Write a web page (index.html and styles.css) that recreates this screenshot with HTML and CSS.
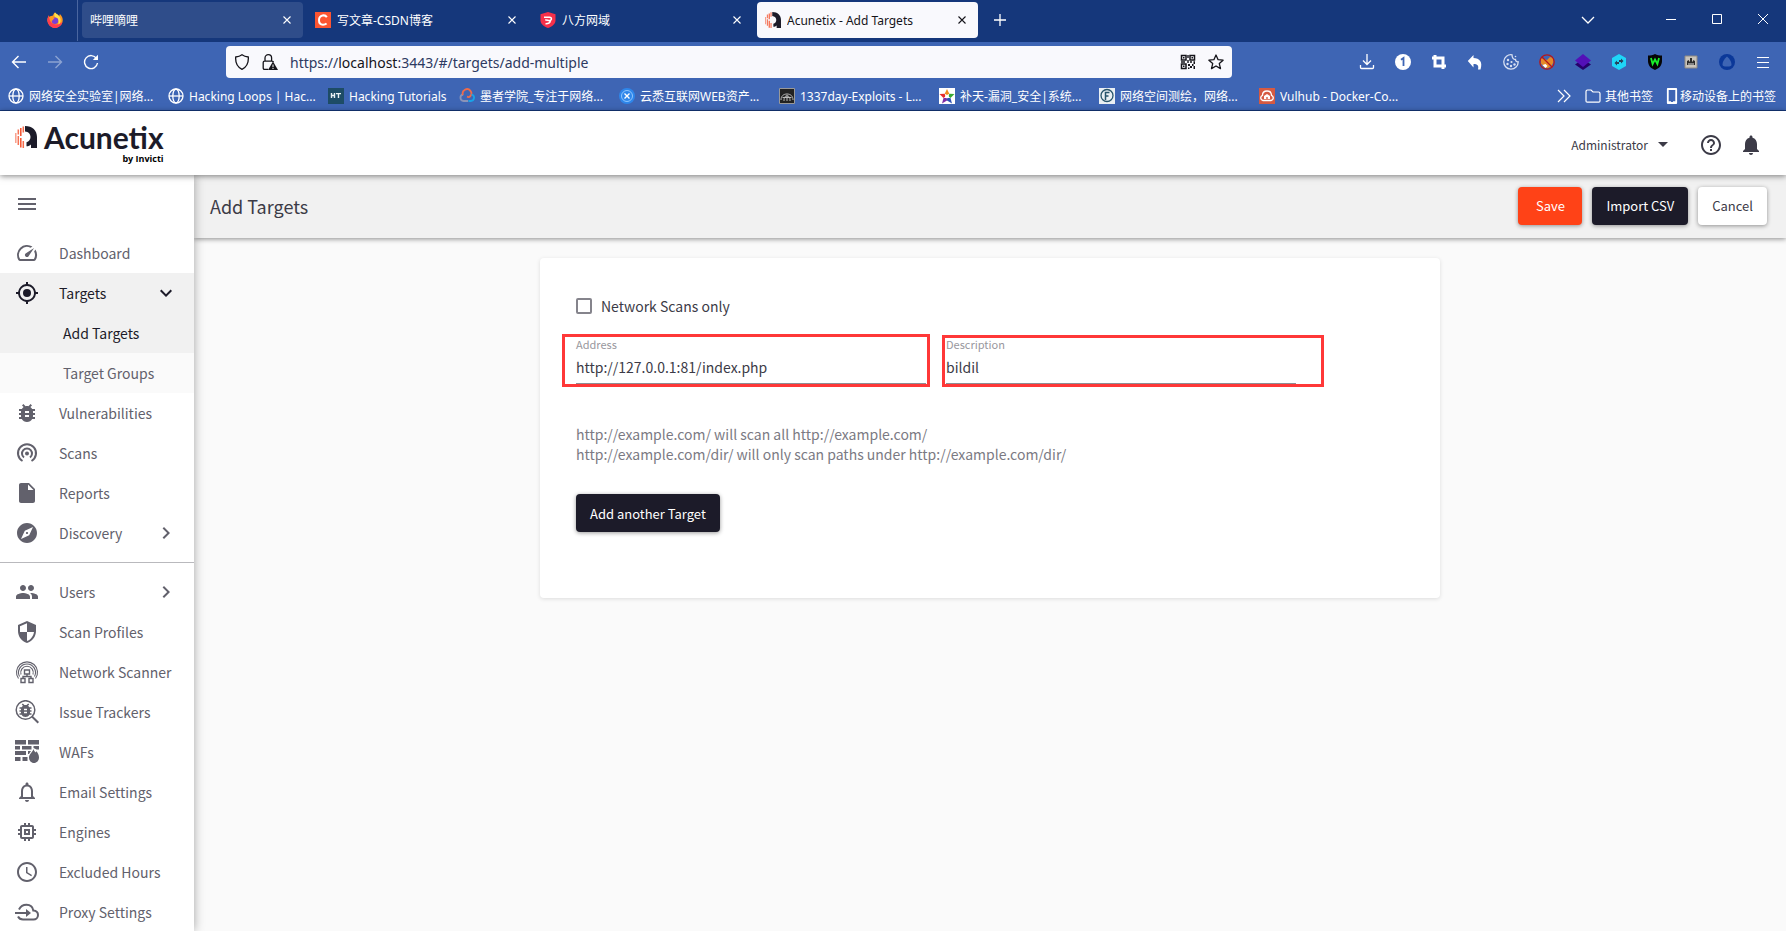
FILE: index.html
```html
<!DOCTYPE html>
<html lang="zh-CN">
<head>
<meta charset="utf-8">
<title>Acunetix - Add Targets</title>
<link rel="stylesheet" href="styles.css">
</head>
<body>
<svg class="defs" width="0" height="0" aria-hidden="true">
  <symbol id="globe" viewBox="0 0 16 16"><g fill="none" stroke="#fff" stroke-width="1.3"><circle cx="8" cy="8" r="7"/><ellipse cx="8" cy="8" rx="3.2" ry="7"/><path d="M1 8h14"/></g></symbol>
  <symbol id="close" viewBox="0 0 16 16"><path d="M4.500 4.500l7 7M11.500 4.500l-7 7" fill="none" stroke="currentColor" stroke-width="1.1"/></symbol>
  <symbol id="mark" viewBox="0 0 22 22"><g stroke="#f4512c" stroke-width="1.5" fill="none"><path d="M.8 7v10" opacity=".55"/><path d="M3.300 3.500v5M3.300 10v9" opacity=".8"/><path d="M5.800 2v8M5.800 12v9.500"/><path d="M8.300 .5v6M8.300 15v7" opacity=".85"/></g><path fill="#1c1b29" d="M10 0C17.500 0 22 4.500 22 11v11h-6v-3.500c-1.200 1.200-2.500 1.800-4.500 1.800v-4c2.500-.8 4-2.700 4-5.300 0-3-2-5.200-5.500-5.500z"/></symbol>
  <symbol id="right" viewBox="0 0 24 24"><path fill="currentColor" d="M8.590 16.590L13.170 12 8.590 7.410 10 6l6 6-6 6z"/></symbol>
  <symbol id="down" viewBox="0 0 24 24"><path fill="currentColor" d="M7.410 8.590L12 13.170l4.590-4.580L18 10l-6 6-6-6z"/></symbol>
</svg>

<header class="browser">
  <div class="tabbar">
    <div class="pinned">
      <svg class="ico16" viewBox="0 0 16 16"><path fill="#ff9a1f" d="M8 .5c1 1.500 3 2 4 3.500.8-.6.8-1.500.7-2.300C15 4 16 6.300 15.700 9A7.700 7.700 0 0 1 .4 8.700C.3 6.500 1 4.700 2 3.300c0 .8.100 1.300.4 1.700C3.400 3.700 5 4 6 3.500 6.500 2.300 7 1.200 8 .5z"/><path fill="#ff3b4f" d="M.4 8.700C.3 6.500 1 4.700 2 3.300c.2 3 .8 9 7 9.200 3.500 0 5.500-2 6.500-2.500C14.500 13.500 11.500 16 8 16S.8 13 .4 8.700z"/><path fill="#ffe14a" d="M8 .5c1 1.500 5.300 3 5.600 7 .2 2.500-.8 4-2 5 .4-3-.5-6-3.600-7.500C7 4 7 2 8 .5z"/><circle cx="8" cy="8.800" r="3.300" fill="#7a3fd6"/><path fill="#ff9a1f" d="M3 6c2-1 4-.5 4.600.6-1 .2-1.600.8-1.400 1.500L4 9z"/></svg>
    </div>
    <div class="tab tab-hover"><span class="tab-title">哔哩嘀哩</span><button class="tab-close" aria-label="Close tab"><svg class="ico16"><use href="#close"/></svg></button></div>
    <div class="tab"><svg class="ico16" viewBox="0 0 16 16"><path fill="#fc5531" d="M0 0h16v16H0z"/><path d="M11.800 5.200C10.800 3.500 9 3.200 7.500 3.500 5 4 4 6 4 8.300c0 2.500 1.500 4.400 4 4.400 1.500 0 2.700-.4 3.600-1.200" fill="none" stroke="#fff" stroke-width="2"/></svg><span class="tab-title">写文章-CSDN博客</span><button class="tab-close" aria-label="Close tab"><svg class="ico16"><use href="#close"/></svg></button></div>
    <div class="tab"><svg class="ico16" viewBox="0 0 16 16"><path fill="#f5304a" d="M8 0l7.500 2.200v6.300c0 3.500-3.500 6-7.500 7.500C4 14.500.5 12 .5 8.500V2.200z"/><path d="M4 5.200h5.500c2.800.2 2.400 3.600-.3 3.300-1.700-.2-2.400-.8-4-.5M5.500 11.800c2.400.2 4.200-.7 5-2.800" fill="none" stroke="#fff" stroke-width="1.500"/></svg><span class="tab-title">八方网域</span><button class="tab-close" aria-label="Close tab"><svg class="ico16"><use href="#close"/></svg></button></div>
    <div class="tab tab-active"><svg class="ico16"><use href="#mark"/></svg><span class="tab-title">Acunetix - Add Targets</span><button class="tab-close" aria-label="Close tab"><svg class="ico16"><use href="#close"/></svg></button></div>
    <button class="new-tab" aria-label="New tab"><svg class="ico16" viewBox="0 0 16 16"><path d="M8 2v12M2 8h12" stroke="#fff" stroke-width="1.300"/></svg></button>
    <div class="window-controls">
      <button aria-label="List tabs"><svg class="ico16" viewBox="0 0 16 16"><path d="M2 5l6 6 6-6" fill="none" stroke="#fff" stroke-width="1.300"/></svg></button>
      <button class="win" aria-label="Minimize"><svg class="ico16" viewBox="0 0 16 16"><path d="M3 7.500h10" stroke="#fff"/></svg></button>
      <button class="win" aria-label="Maximize"><svg class="ico16" viewBox="0 0 16 16"><path d="M3.500 2.500h9v9h-9z" fill="none" stroke="#fff"/></svg></button>
      <button class="win" aria-label="Close"><svg class="ico16" viewBox="0 0 16 16"><path d="M3 2l10 10M13 2L3 12" stroke="#fff"/></svg></button>
    </div>
  </div>

  <div class="navbar">
    <div class="nav-buttons">
      <button aria-label="Back"><svg class="ico16" viewBox="0 0 16 16"><path d="M15 8H2M7.500 2L1.500 8l6 6" fill="none" stroke="#fff" stroke-width="1.400"/></svg></button>
      <button class="dim" aria-label="Forward"><svg class="ico16" viewBox="0 0 16 16"><path d="M1 8h13M8.500 2l6 6-6 6" fill="none" stroke="#fff" stroke-width="1.400"/></svg></button>
      <button aria-label="Reload"><svg class="ico16" viewBox="0 0 16 16"><path d="M13.500 4.500A6.500 6.500 0 1 0 14.500 9" fill="none" stroke="#fff" stroke-width="1.400"/><path d="M15 .8V6H9.800z" fill="#fff"/></svg></button>
    </div>
    <div class="urlbar">
      <svg class="ico16" viewBox="0 0 16 16"><path d="M8 .8c2 1.500 4 2 6.300 2.200.4 5.500-1.300 10-6.300 12.300C3 13 1.300 8.500 1.700 3 4 2.800 6 2.300 8 .8z" fill="none" stroke="#15141a" stroke-width="1.300"/></svg>
      <svg class="ico16" viewBox="0 0 16 16"><path d="M6 15.300H2.500c-.8 0-1.300-.5-1.300-1.300V8.500c0-.8.500-1.300 1.300-1.300h7.600c.8 0 1.200.3 1.300 1M3 7V4a3.300 3.300 0 0 1 6.600 0v3" fill="none" stroke="#15141a" stroke-width="1.300"/><path d="M11 7.500l5 8.500H6z" fill="#15141a"/><path d="M11 10.500v2.700M11 14v1" stroke="#fff"/></svg>
      <a class="url" href="#/targets/add-multiple">https://<span class="host">localhost</span>:3443/#/targets/add-multiple</a>
      <svg class="ico16" viewBox="0 0 16 16"><g fill="none" stroke="#15141a" stroke-width="1.500"><path d="M1.500 1.500h4.500v4.500H1.500zM10 1.500h4.500v4.500H10zM1.500 10h4.500v4.500H1.500z"/></g><path fill="#15141a" d="M3 3h1.500v1.500H3zM11.500 3H13v1.500h-1.500zM3 11.500h1.500V13H3zM7.300 1h1.400v3H7.300zM7.300 6h1.400v3H7.300zM1 7.300h4v1.400H1zM10 7.300h2v1.400h-2zM13.500 7.300H15V10h-1.500zM8 10h2v2H8zM10 12h2v2h-2zM12 10h1.500v2H12zM13.500 12H15v3h-1.500zM8 13.500h1.500V15H8z"/></svg>
      <svg class="ico16" viewBox="0 0 16 16"><path d="M8 1l2.100 4.700 5 .5-3.800 3.400 1.200 5L8 12l-4.500 2.600 1.200-5L.9 6.200l5-.5z" fill="none" stroke="#15141a" stroke-width="1.300" stroke-linejoin="round"/></svg>
    </div>
    <div class="extensions">
      <button aria-label="Downloads"><svg class="ico16" viewBox="0 0 16 16"><path d="M8 0v10M4 6.500l4 4 4-4M1.500 11v2.500c0 .7.300 1 1 1h11c.7 0 1-.3 1-1V11" fill="none" stroke="#fff" stroke-width="1.300"/></svg></button>
      <button aria-label="Extension notices"><svg class="ico16" viewBox="0 0 16 16"><circle cx="8" cy="8" r="8" fill="#fff"/><path d="M6 5.800L8.500 4v8" fill="none" stroke="#3e65b4" stroke-width="1.800"/></svg></button>
      <button aria-label="Crop"><svg class="ico16" viewBox="0 0 16 16"><path d="M1 4h11v11M4 1v11h11" fill="none" stroke="#fff" stroke-width="3"/></svg></button>
      <button aria-label="Undo"><svg class="ico16" viewBox="0 0 16 16"><path d="M6.500 1v3c6 0 9.500 4 7 11.500h-2.500c1-4-.5-5.500-4.500-5.500v3.500L.8 7z" fill="#fff"/></svg></button>
      <button aria-label="Cookies"><svg class="ico16" viewBox="0 0 16 16"><path d="M9 .8a7.200 7.200 0 1 0 6.200 7c-1.700.2-2.700-.8-2.700-2.300C10.500 5.600 9 4 9 .8z" fill="none" stroke="#d8e0f2" stroke-width="1.300"/><g fill="#d8e0f2"><circle cx="5" cy="6" r="1.200"/><circle cx="4.500" cy="10" r="1.200"/><circle cx="8.500" cy="8" r="1.100"/><circle cx="8" cy="12" r="1.200"/><circle cx="11.500" cy="10.500" r="1.200"/><circle cx="12.500" cy="2.500" r=".8"/></g></svg></button>
      <button aria-label="Blocker"><svg class="ico16" viewBox="0 0 16 16"><path fill="#e58a28" d="M2 4l3 1 3 1 3-3 3 1 .5 4-2 4-4 2.500-3-1-3.500-4z"/><path fill="#fff" d="M3.500 11l3-1 2 2-2 2z"/><circle cx="8" cy="8" r="7.200" fill="none" stroke="#b5161b" stroke-width="1.300"/><path d="M3 3l10 10" stroke="#b5161b" stroke-width="1.300"/></svg></button>
      <button aria-label="Layers"><svg class="ico16" viewBox="0 0 16 16"><path fill="#26006b" d="M0 10.500L8 5l8 5.500L8 16z"/><path fill="#5310b8" d="M0 6.500L8 0l8 6.500L8 13z"/></svg></button>
      <button aria-label="Proxy"><svg class="ico16" viewBox="0 0 16 16"><path fill="#1fd5f7" d="M8 0l7 4v8l-7 4-7-4V4z"/><path d="M3.500 9L6 6.500V8h2v2H6v1.500zM12.500 7L10 4.500V6H8v2h2v1.500z" fill="#27415c"/></svg></button>
      <button aria-label="Wappalyzer"><svg class="ico16" viewBox="0 0 16 16"><path fill="#050505" d="M8 0c2 1 4.500 1.600 7 1.600V7c0 4.500-3 7.500-7 9-4-1.500-7-4.500-7-9V1.600C3.500 1.600 6 1 8 0z"/><path d="M4 4l1.600 6L8 5.500l2.400 4.500L12 4" fill="none" stroke="#19f02a" stroke-width="1.800"/></svg></button>
      <button aria-label="Toolbox"><svg class="ico16" viewBox="0 0 16 16"><path fill="#c9c4bb" stroke="#8f8a82" d="M2 2h12v12H2z"/><path fill="#2c2c2c" d="M7 4h2v3l1 1V6l2 1v4H4V7l2-1v2l1-1z"/><path d="M5 10h6" stroke="#ddd"/></svg></button>
      <button aria-label="Hackbar"><svg class="ico16" viewBox="0 0 16 16"><circle cx="8" cy="8" r="8" fill="#0b3899"/><path d="M8 2.500c2.500 2 4.500 5 4.500 8 0 1.500-1 2-4.500 2s-4.500-.5-4.500-2c0-3 2-6 4.500-8z" fill="#3e65b4"/></svg></button>
      <button aria-label="Menu"><svg class="ico16" viewBox="0 0 16 16"><path d="M2 3.500h12M2 8.500h12M2 13.500h12" stroke="#fff"/></svg></button>
    </div>
  </div>

  <nav class="bookmarks" aria-label="Bookmarks">
    <a class="bm" href="#"><svg class="ico16"><use href="#globe"/></svg><span>网络安全实验室|网络...</span></a>
    <a class="bm" href="#"><svg class="ico16"><use href="#globe"/></svg><span>Hacking Loops | Hac...</span></a>
    <a class="bm bm-short" href="#"><svg class="ico16" viewBox="0 0 16 16"><path fill="#1d4c66" d="M0 0h16v16H0z"/><path d="M3.500 5v5M6.500 5v5M3.500 7.500h3M8 5.600h5M10.500 5v5" stroke="#e9f1f4" stroke-width="1.400" fill="none"/></svg><span>Hacking Tutorials</span></a>
    <a class="bm" href="#"><svg class="ico16" viewBox="0 0 16 16"><path d="M9 13H4.500A3.300 3.300 0 0 1 4 6.500" fill="none" stroke="#8a93b8" stroke-width="1.800"/><path d="M4 7a4.300 4.300 0 1 1 7 1.500c-1 1-2 .6-3 .2" fill="none" stroke="#ef6b4a" stroke-width="1.800"/><path d="M12.500 6.500a3.300 3.300 0 0 1-1 6.500H9.500" fill="none" stroke="#19a3e8" stroke-width="1.800"/></svg><span>墨者学院_专注于网络...</span></a>
    <a class="bm" href="#"><svg class="ico16" viewBox="0 0 16 16"><circle cx="8" cy="8" r="8" fill="#2e86ea"/><circle cx="8" cy="8" r="5.500" fill="none" stroke="#8ec6ff"/><path d="M5.500 5.500l5 5M10.500 5.500l-5 5" stroke="#fff" stroke-width="1.400"/></svg><span>云悉互联网WEB资产...</span></a>
    <a class="bm" href="#"><svg class="ico16" viewBox="0 0 16 16"><path fill="#222" stroke="#999" d="M.5.5h15v15H.5z"/><path fill="none" stroke="#bbb" d="M2 12c0-4 2.500-6 6-6s6 2 6 6M5 13c0-4 1-5 3-5s3 1 3 5M8 7v6M3.500 9.500h9"/></svg><span>1337day-Exploits - L...</span></a>
    <a class="bm" href="#"><svg class="ico16" viewBox="0 0 16 16"><path fill="#fff" d="M0 0h16v16H0z"/><path fill="#f08a1c" d="M8 1l2.300 4.700L8 7 5.700 5.700z"/><path fill="#39a935" d="M15.500 6l-4 4-2-1.500.8-2.800z"/><path fill="#2d50b5" d="M13 15.500L8 12.500V10l3.500 0z"/><path fill="#7d2ba5" d="M3 15.500L4.500 10H8v2.500z"/><path fill="#e62b2b" d="M.5 6l5.200-.3.800 2.800-2 1.500z"/><circle cx="8" cy="8.600" r="1.800" fill="#fff"/></svg><span>补天-漏洞_安全|系统...</span></a>
    <a class="bm" href="#"><svg class="ico16" viewBox="0 0 16 16"><path fill="#e9eff3" d="M0 0h16v16H0z"/><circle cx="8" cy="7.500" r="6" fill="none" stroke="#27546b" stroke-width="1.300"/><path d="M6.500 12V4.500h4M6.500 8h3" fill="none" stroke="#27546b" stroke-width="1.500"/></svg><span>网络空间测绘，网络...</span></a>
    <a class="bm" href="#"><svg class="ico16" viewBox="0 0 16 16"><path fill="#d65a42" d="M0 0h16v16H0z"/><path d="M4 12.500a2.700 2.700 0 0 1-.5-5.200C3.500 4.500 5.500 3 8 3s4.500 1.500 4.500 4.300a2.700 2.700 0 0 1-.5 5.200z" fill="none" stroke="#fff" stroke-width="1.300"/><path d="M5 11V8l3-2 3 2v3z" fill="#fff"/><path d="M7.300 9h1.400v2H7.300z" fill="#d65a42"/></svg><span>Vulhub - Docker-Co...</span></a>
    <div class="bm-end">
      <button aria-label="More bookmarks"><svg class="ico16" viewBox="0 0 16 16"><path d="M2 2l6 6-6 6M8 2l6 6-6 6" fill="none" stroke="#fff" stroke-width="1.200"/></svg></button>
      <a class="bm-link" href="#"><svg class="ico16" viewBox="0 0 16 16"><path d="M1 13V3.500C1 2.500 1.500 2 2.500 2H6l2 2h5.500c1 0 1.500.5 1.500 1.500V13c0 .8-.4 1.200-1.200 1.200H2.200C1.400 14.200 1 13.800 1 13z" fill="none" stroke="#fff" stroke-width="1.200"/></svg><span>其他书签</span></a>
      <a class="bm-link bm-phone" href="#"><svg class="phone" viewBox="0 0 12 16"><path d="M1.800 1h8.400v14H1.800z" fill="none" stroke="#fff" stroke-width="1.800" stroke-linejoin="round"/><path d="M2 14h3M7 14h3" stroke="#fff" stroke-width="1.600"/></svg><span>移动设备上的书签</span></a>
    </div>
  </nav>
</header>

<header class="app-header">
  <a class="logo" href="#" aria-label="Acunetix by Invicti">
    <svg class="logo-mark"><use href="#mark"/></svg>
    <span class="logo-text"><span class="logo-name">Acunetix</span><span class="logo-by">by Invicti</span></span>
  </a>
  <div class="account">
    <button class="user">Administrator<svg class="caret" viewBox="0 0 10 5"><path d="M0 0h10L5 5z" fill="#3c3b47"/></svg></button>
    <button aria-label="Help"><svg class="ico24" viewBox="0 0 24 24"><path fill="#3c3b47" d="M11 18h2v-2h-2v2zm1-16C6.480 2 2 6.480 2 12s4.480 10 10 10 10-4.480 10-10S17.520 2 12 2zm0 18c-4.410 0-8-3.590-8-8s3.590-8 8-8 8 3.590 8 8-3.590 8-8 8zm0-14c-2.210 0-4 1.790-4 4h2c0-1.100.9-2 2-2s2 .9 2 2c0 2-3 1.750-3 5h2c0-2.250 3-2.500 3-5 0-2.210-1.790-4-4-4z"/></svg></button>
    <button aria-label="Notifications"><svg class="ico24" viewBox="0 0 24 24"><path fill="#3c3b47" d="M12 22c1.100 0 2-.9 2-2h-4c0 1.100.9 2 2 2zm6-6v-5c0-3.070-1.630-5.640-4.500-6.320V4c0-.83-.67-1.500-1.500-1.500s-1.500.67-1.500 1.500v.68C7.640 5.360 6 7.920 6 11v5l-2 2v1h16v-1z"/></svg></button>
  </div>
</header>

<div class="app">
  <nav class="sidebar" aria-label="Main">
    <button class="burger" aria-label="Toggle menu"><svg class="ico24" viewBox="0 0 24 24"><path fill="currentColor" d="M3 18h18v-2H3zm0-5h18v-2H3zm0-7v2h18V6z"/></svg></button>
    <a class="item" href="#"><svg class="ico24" viewBox="0 0 24 24"><path fill="currentColor" d="M20.380 8.570l-1.230 1.850a8 8 0 0 1-.22 7.580H5.070A8 8 0 0 1 15.580 6.850l1.850-1.230A10 10 0 0 0 3.350 19a2 2 0 0 0 1.720 1h13.850a2 2 0 0 0 1.740-1 10 10 0 0 0-.27-10.440zm-9.790 6.840a2 2 0 0 0 2.830 0l5.660-8.490-8.490 5.660a2 2 0 0 0 0 2.830z"/></svg><span>Dashboard</span></a>
    <a class="item current" href="#"><svg class="ico24" viewBox="0 0 24 24"><circle cx="12" cy="12" r="4" fill="currentColor"/><path fill="currentColor" d="M20.940 11A8.990 8.990 0 0 0 13 3.060V1h-2v2.060A8.990 8.990 0 0 0 3.060 11H1v2h2.060A8.990 8.990 0 0 0 11 20.940V23h2v-2.060A8.990 8.990 0 0 0 20.940 13H23v-2zM12 19c-3.870 0-7-3.130-7-7s3.130-7 7-7 7 3.130 7 7-3.130 7-7 7z"/></svg><span>Targets</span><svg class="chevron"><use href="#down"/></svg></a>
    <a class="item sub current" href="#"><span>Add Targets</span></a>
    <a class="item sub" href="#"><span>Target Groups</span></a>
    <a class="item" href="#"><svg class="ico24" viewBox="0 0 24 24"><path fill="currentColor" d="M20 8h-2.810c-.45-.78-1.070-1.450-1.820-1.960L17 4.410 15.590 3l-2.170 2.170C12.960 5.060 12.490 5 12 5s-.96.060-1.410.170L8.410 3 7 4.410l1.620 1.630C7.880 6.550 7.260 7.220 6.810 8H4v2h2.090c-.05.330-.09.660-.09 1v1H4v2h2v1c0 .34.040.67.090 1H4v2h2.810c1.040 1.790 2.970 3 5.190 3s4.150-1.210 5.190-3H20v-2h-2.090c.05-.33.090-.66.090-1v-1h2v-2h-2v-1c0-.34-.04-.67-.09-1H20zm-6 8h-4v-2h4zm0-4h-4v-2h4z"/></svg><span>Vulnerabilities</span></a>
    <a class="item" href="#"><svg class="ico24" viewBox="0 0 24 24"><g fill="none" stroke="currentColor" stroke-width="2"><path d="M7.500 20A9 9 0 1 1 16.500 20M9 16.500a5 5 0 1 1 6 0"/></g><circle cx="12" cy="12.500" r="2" fill="currentColor"/></svg><span>Scans</span></a>
    <a class="item" href="#"><svg class="ico24" viewBox="0 0 24 24"><path fill="currentColor" d="M6 2c-1.100 0-2 .9-2 2v16c0 1.100.9 2 2 2h12c1.100 0 2-.9 2-2V8l-6-6zm7 7V3.500L18.500 9z"/></svg><span>Reports</span></a>
    <a class="item" href="#"><svg class="ico24" viewBox="0 0 24 24"><path fill="currentColor" d="M12 10.900c-.61 0-1.100.49-1.100 1.100s.49 1.100 1.100 1.100 1.100-.49 1.100-1.100-.49-1.100-1.100-1.100zM12 2C6.480 2 2 6.480 2 12s4.480 10 10 10 10-4.480 10-10S17.520 2 12 2zm2.190 12.190L6 18l3.810-8.190L18 6z"/></svg><span>Discovery</span><svg class="chevron"><use href="#right"/></svg></a>
    <hr class="divider">
    <a class="item" href="#"><svg class="ico24" viewBox="0 0 24 24"><path fill="currentColor" d="M16 11c1.660 0 2.990-1.340 2.990-3S17.660 5 16 5s-3 1.340-3 3 1.340 3 3 3zm-8 0c1.660 0 2.990-1.340 2.990-3S9.660 5 8 5 5 6.340 5 8s1.340 3 3 3zm0 2c-2.330 0-7 1.170-7 3.500V19h14v-2.500c0-2.330-4.670-3.500-7-3.500zm8 0c-.29 0-.62.020-.97.050 1.160.84 1.970 1.970 1.970 3.450V19h6v-2.500c0-2.330-4.670-3.500-7-3.500z"/></svg><span>Users</span><svg class="chevron"><use href="#right"/></svg></a>
    <a class="item" href="#"><svg class="ico24" viewBox="0 0 24 24"><path fill="currentColor" d="M12 1L3 5v6c0 5.550 3.840 10.740 9 12 5.160-1.260 9-6.450 9-12V5zm0 10.990h7c-.53 4.120-3.280 7.790-7 8.940V12H5V6.300l7-3.110z"/></svg><span>Scan Profiles</span></a>
    <a class="item" href="#"><svg class="ico24" viewBox="0 0 24 24"><g fill="none" stroke="currentColor" stroke-width="1.100"><path d="M3.500 18.500A10.500 10.500 0 1 1 20.500 18.500M4.500 16.500a8.500 8.500 0 1 1 15 0M6 14.500a6.300 6.300 0 1 1 12 0"/><path d="M9.500 10h5v4h-5zM6 18.500h4v4H6zM14 18.500h4v4h-4zM12 14v2.500M8 18.500v-2h8v2" stroke-width="1.400"/></g></svg><span>Network Scanner</span></a>
    <a class="item" href="#"><svg class="ico24" viewBox="0 0 24 24"><circle cx="10.500" cy="10" r="9.300" fill="none" stroke="currentColor" stroke-width="1.500"/><path d="M17 16.500l6.300 6.300" stroke="currentColor" stroke-width="2"/><path fill="currentColor" transform="translate(1.500 1.200) scale(.75)" d="M20 8h-2.810c-.45-.78-1.070-1.450-1.820-1.960L17 4.410 15.590 3l-2.170 2.170C12.960 5.060 12.490 5 12 5s-.96.060-1.410.170L8.410 3 7 4.410l1.620 1.630C7.880 6.550 7.260 7.220 6.810 8H4v2h2.090c-.05.330-.09.660-.09 1v1H4v2h2v1c0 .34.040.67.090 1H4v2h2.810c1.040 1.790 2.970 3 5.190 3s4.150-1.210 5.190-3H20v-2h-2.090c.05-.33.090-.66.090-1v-1h2v-2h-2v-1c0-.34-.04-.67-.09-1H20zm-6 8h-4v-2h4zm0-4h-4v-2h4z"/></svg><span>Issue Trackers</span></a>
    <a class="item" href="#"><svg class="ico24" viewBox="0 0 24 24"><path fill="currentColor" d="M0 0h11v4.500H0zM13 0h11v4.500H13zM0 6h5v3.500H0zM7 6h9.500v3.500H7zM18.500 6H24v3.500h-2.500L18.500 8zM0 11h11v4H0zM13 11h3l-2 3h-1zM0 17h5.500v4H0zM7.500 17h5v4h-5z"/><path fill="currentColor" d="M18.500 9c.5 2 1.500 2.500 2 3.500l1-1.200c1.500 2 2.500 3.700 2.500 6.200 0 3-2.200 5.500-5 5.500s-5-2.500-5-5.500c0-3.500 3.500-5 4.500-8.500z"/></svg><span>WAFs</span></a>
    <a class="item" href="#"><svg class="ico24" viewBox="0 0 24 24"><path fill="currentColor" d="M12 22c1.100 0 2-.9 2-2h-4c0 1.100.9 2 2 2zm6-6v-5c0-3.070-1.630-5.640-4.500-6.320V4c0-.83-.67-1.500-1.500-1.500s-1.500.67-1.500 1.500v.68C7.640 5.360 6 7.920 6 11v5l-2 2v1h16v-1zm-2 1H8v-6c0-2.480 1.510-4.500 4-4.500s4 2.020 4 4.500z"/></svg><span>Email Settings</span></a>
    <a class="item" href="#"><svg class="ico24" viewBox="0 0 24 24"><path fill="currentColor" d="M15 9H9v6h6zm-2 4h-2v-2h2zm8-2V9h-2V7c0-1.100-.9-2-2-2h-2V3h-2v2h-2V3H9v2H7c-1.100 0-2 .9-2 2v2H3v2h2v2H3v2h2v2c0 1.100.9 2 2 2h2v2h2v-2h2v2h2v-2h2c1.100 0 2-.9 2-2v-2h2v-2h-2v-2zm-4 6H7V7h10z"/></svg><span>Engines</span></a>
    <a class="item" href="#"><svg class="ico24" viewBox="0 0 24 24"><path fill="currentColor" d="M11.990 2C6.470 2 2 6.480 2 12s4.470 10 9.990 10C17.520 22 22 17.520 22 12S17.520 2 11.990 2zM12 20c-4.420 0-8-3.580-8-8s3.580-8 8-8 8 3.580 8 8-3.580 8-8 8zm.5-13H11v6l5.250 3.150.75-1.230-4.500-2.670z"/></svg><span>Excluded Hours</span></a>
    <a class="item" href="#"><svg class="ico24" viewBox="0 0 24 24"><path d="M4 9.500C5.500 6.500 8 4.800 11.500 4.800c4 0 6.300 2.500 6.800 5.700 3 .3 4.700 2 4.700 4.500s-2 4.500-4.500 4.500H8c-2.500 0-4-1-5-3" fill="none" stroke="currentColor" stroke-width="2"/><path d="M0 13h12" fill="none" stroke="currentColor" stroke-width="2"/><path d="M11 9l5 4-5 4z" fill="currentColor"/></svg><span>Proxy Settings</span></a>
  </nav>

  <main class="main">
    <div class="page-head">
      <h1 class="page-title">Add Targets</h1>
      <div class="actions">
        <button class="btn btn-save">Save</button>
        <button class="btn btn-dark">Import CSV</button>
        <button class="btn btn-light">Cancel</button>
      </div>
    </div>
    <form class="card">
      <label class="check"><input type="checkbox" class="checkbox">Network Scans only</label>
      <div class="fields">
        <div class="field field-address"><label for="address">Address</label><input id="address" type="text" value="http://127.0.0.1:81/index.php"></div>
        <div class="field field-desc"><label for="desc">Description</label><input id="desc" type="text" value="bildil"></div>
      </div>
      <p class="hint">http://example.com/ will scan all http://example.com/<br>http://example.com/dir/ will only scan paths under http://example.com/dir/</p>
      <button type="button" class="btn btn-dark">Add another Target</button>
    </form>
  </main>
</div>
</body>
</html>
```
FILE: styles.css
```css
* { box-sizing: border-box; }

body {
  margin: 0;
  height: 100vh;
  overflow: hidden;
  display: flex;
  flex-direction: column;
  background: #fafafa;
  color: #3c3b47;
  font-family: "Noto Sans CJK SC", "Noto Sans", sans-serif;
  font-size: 14px;
}

button {
  margin: 0;
  padding: 0;
  border: 0;
  background: none;
  color: inherit;
  font: inherit;
  display: flex;
  align-items: center;
  justify-content: center;
}

a { color: inherit; text-decoration: none; }
svg { display: block; flex: none; }
.defs { position: absolute; }
.ico16 { width: 16px; height: 16px; }
.ico24 { width: 24px; height: 24px; }

/* Browser chrome */
.browser {
  flex: none;
  background: #3e65b4;
  color: #fff;
  font-family: "Noto Sans", "Noto Sans CJK SC", sans-serif;
  font-size: 12px;
  border-bottom: 1px solid #15377b;
}

.tabbar {
  display: flex;
  align-items: center;
  gap: 4px;
  height: 42px;
  padding-bottom: 2px;
  background: #15377b;
}

.pinned {
  width: 78px;
  height: 42px;
  padding-left: 47px;
  display: flex;
  align-items: center;
  border-right: 1px solid #4a66a0;
}

.tab {
  width: 221px;
  height: 36px;
  padding: 0 8px;
  display: flex;
  align-items: center;
  gap: 6px;
  border-radius: 4px;
}

.tab-hover { background: #2f4d8a; }
.tab-active { background: #f9f9fd; color: #15141a; }
.tab-title { flex: 1; white-space: nowrap; overflow: hidden; }
.new-tab { width: 36px; height: 36px; }
.window-controls { margin-left: auto; display: flex; align-items: center; }
.window-controls button { width: 36px; height: 40px; }
.window-controls .win { width: 46px; }
.window-controls button:first-child { margin-right: 42px; }

.navbar {
  display: flex;
  align-items: center;
  height: 40px;
  padding: 0 5px 0 1px;
}

.nav-buttons, .extensions { display: flex; }
.nav-buttons { width: 225px; }
.nav-buttons button, .extensions button { width: 36px; height: 36px; }
.nav-buttons .dim { opacity: .4; }
.extensions { margin-left: auto; }

.urlbar {
  flex: 0 1 1006px;
  height: 32px;
  padding: 0 8px;
  display: flex;
  align-items: center;
  gap: 12px;
  border-radius: 4px;
  background: #f9f9fd;
  color: #2e3a62;
  font-family: "Noto Sans", sans-serif;
  font-size: 14px;
}

.url { flex: 1; }
.host { color: #15141a; }

.bookmarks {
  display: flex;
  align-items: center;
  height: 28px;
  padding: 0 10px 0 8px;
}

.bm {
  flex: 0 1 160px;
  min-width: 0;
  display: flex;
  align-items: center;
  gap: 5px;
  white-space: nowrap;
}

.bm-short { flex-basis: 131px; }
.bm-end { margin-left: auto; display: flex; align-items: center; gap: 13px; }
.bm-link { display: flex; align-items: center; gap: 4px; white-space: nowrap; }
.bm-phone { gap: 2px; }
.phone { width: 12px; height: 16px; }

/* Application header */
.app-header {
  position: relative;
  z-index: 3;
  flex: none;
  height: 64px;
  padding: 0 23px 0 15px;
  display: flex;
  align-items: center;
  justify-content: space-between;
  background: #fff;
  box-shadow: 0 1px 6px rgba(0, 0, 0, .5);
}

.logo { display: flex; align-items: flex-start; gap: 7px; color: #1c1b29; }
.logo-mark { width: 22px; height: 22px; margin-top: 5px; }
.logo-text { display: flex; flex-direction: column; align-items: flex-end; font-family: Lato, sans-serif; font-weight: 700; }
.logo-name { font-size: 30px; line-height: 32px; }
.logo-by { font-family: "Open Sans", sans-serif; font-size: 9px; line-height: 12px; color: #000; }

.account { display: flex; align-items: center; gap: 16px; padding-top: 3px; }
.user { gap: 10px; margin-right: 15px; font-size: 12px; }
.caret { width: 10px; height: 5px; }

/* Layout */
.app { flex: 1; min-height: 0; display: flex; }

.sidebar {
  position: relative;
  z-index: 2;
  flex: none;
  width: 194px;
  padding-top: 9px;
  background: #fff;
  color: #62616c;
  box-shadow: 0 0 10px rgba(0, 0, 0, .35);
}

.burger { width: 54px; height: 40px; margin-bottom: 9px; }

.item {
  height: 40px;
  padding: 0 16px 0 15px;
  display: flex;
  align-items: center;
  gap: 20px;
}

.item span { flex: 1; white-space: nowrap; }
.sub { padding-left: 63px; background: #fafafa; }
.current { background: #f1f1f1; color: #1c1b29; }
.chevron { width: 24px; height: 24px; }
.divider { height: 1px; margin: 9px 0; border: 0; background: #b9b9bd; }

.main { flex: 1; min-width: 0; }

.page-head {
  height: 63px;
  padding: 0 19px 2px 16px;
  display: flex;
  align-items: center;
  justify-content: space-between;
  background: #f1f1f1;
  box-shadow: 0 1px 5px rgba(0, 0, 0, .45);
}

.page-title { margin: 0; font-size: 18px; font-weight: 400; }
.actions { display: flex; gap: 10px; }

.btn {
  min-width: 64px;
  height: 38px;
  padding: 0 14px;
  border-radius: 4px;
  font-size: 13px;
  box-shadow: 0 1px 4px rgba(0, 0, 0, .4);
}

.btn-save { background: #ff4217; color: #fff; }
.btn-dark { background: #1c1b29; color: #fff; }
.btn-light { background: #fff; }

/* Form card */
.card {
  max-width: 900px;
  margin: 20px auto;
  padding: 36px 36px 66px;
  background: #fff;
  border-radius: 4px;
  box-shadow: 0 1px 4px rgba(0, 0, 0, .12);
}

.check { display: flex; align-items: center; gap: 9px; height: 24px; }

.checkbox {
  appearance: none;
  width: 16px;
  height: 16px;
  margin: 0;
  border: 2px solid #85848c;
  border-radius: 2px;
}

.fields { display: flex; gap: 20px; margin-top: 18px; }
.field { position: relative; flex: 0 1 350px; }
.field label { display: block; font-size: 11px; line-height: 16px; color: #98979d; }

.field input {
  width: 100%;
  height: 32px;
  padding: 0 0 2px;
  border: 0;
  border-bottom: 1px solid #8e8d94;
  background: none;
  color: inherit;
  font: inherit;
}

/* Red annotation frames around the two inputs */
.field::after {
  content: "";
  position: absolute;
  border: 3px solid #ff3838;
  pointer-events: none;
}

.field-address::after { inset: -2px -4px -3px -14px; }
.field-desc::after { inset: -1px -28px -3px -4px; }

.hint { margin: 40px 0 30px; line-height: 20px; color: #7b7a83; }
```
